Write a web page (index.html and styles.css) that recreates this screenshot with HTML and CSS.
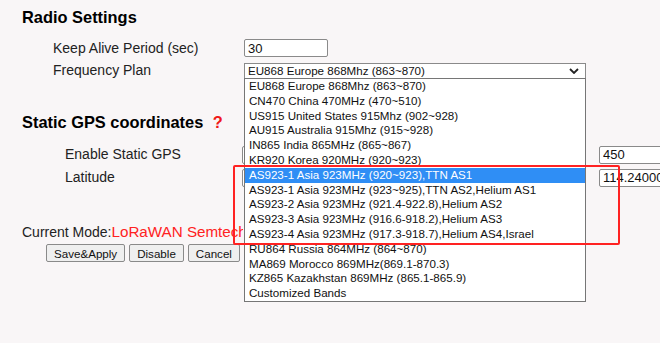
FILE: index.html
```html
<!DOCTYPE html>
<html lang="en">
<head>
    <meta charset="UTF-8">
    <title>Radio Settings</title>
    <link rel="stylesheet" href="styles.css">
</head>
<body>
    <div id="page">
        <h3 class="title">Radio Settings</h3>
        <div class="row sub">
            <span class="lbl">Keep Alive Period (sec)</span>
            <input class="txt short" type="text" value="30"/>
        </div>
        <div class="row sub">
            <span class="lbl">Frequency Plan</span>
            <div class="select">
                <span>EU868 Europe 868Mhz (863~870)</span>
                <svg width="10" height="6" viewBox="0 0 10 6"><polyline points="1,1 5,5 9,1" fill="none" stroke="#222" stroke-width="1.8"/></svg>
            </div>
        </div>

        <h3 class="title gps">Static GPS coordinates <span class="help">?</span></h3>
        <div class="row gpsrow">
            <span class="lbl">Enable Static GPS</span>
            <input class="txt hid" type="text" value=""/>
            <span class="gap"></span>
            <input class="txt side" type="text" value="450"/>
        </div>
        <div class="row gpsrow">
            <span class="lbl">Latitude</span>
            <input class="txt hid" type="text" value=""/>
            <span class="gap"></span>
            <input class="txt side" type="text" value="114.240000"/>
        </div>

        <p class="mode">Current Mode:<span class="red">LoRaWAN Semtech UDP</span></p>
        <div class="btns">
            <button>Save&amp;Apply</button>
            <button>Disable</button>
            <button>Cancel</button>
        </div>
    </div>

    <ul class="popup">
        <li>EU868 Europe 868Mhz (863~870)</li>
        <li>CN470 China 470MHz (470~510)</li>
        <li>US915 United States 915Mhz (902~928)</li>
        <li>AU915 Australia 915Mhz (915~928)</li>
        <li>IN865 India 865MHz (865~867)</li>
        <li>KR920 Korea 920MHz (920~923)</li>
        <li class="on">AS923-1 Asia 923MHz (920~923),TTN AS1</li>
        <li>AS923-1 Asia 923MHz (923~925),TTN AS2,Helium AS1</li>
        <li>AS923-2 Asia 923MHz (921.4-922.8),Helium AS2</li>
        <li>AS923-3 Asia 923MHz (916.6-918.2),Helium AS3</li>
        <li>AS923-4 Asia 923MHz (917.3-918.7),Helium AS4,Israel</li>
        <li>RU864 Russia 864MHz (864~870)</li>
        <li>MA869 Morocco 869MHz(869.1-870.3)</li>
        <li>KZ865 Kazakhstan 869MHz (865.1-865.9)</li>
        <li>Customized Bands</li>
    </ul>
    <div class="mark"></div>
</body>
</html>
```

FILE: styles.css
```css
body,div,p,ul,li,h3{margin:0;padding:0;}
ul{list-style-type:none;}
html,body{height:100%;}
body{background:#f9f6f7;font:14px/1.2 "Liberation Sans",Arial,sans-serif;color:#222;overflow:hidden;}
#page{padding:7px 0 0 22px;}
.title{font-size:16.4px;line-height:20px;color:#000;font-weight:700;}
.title.gps{margin:31px 0 11px;}
.help{color:#f01818;margin-left:5px;}
.row{display:flex;align-items:center;}
.row > *{flex-shrink:0;}
.row.sub{height:22px;padding-left:31px;}
.row.sub:first-of-type{margin-top:10px;}
.row.sub .lbl{width:191px;}
.row.gpsrow{height:23px;padding-left:43px;}
.row.gpsrow .lbl{width:177px;}
.txt{box-sizing:border-box;height:18px;border:1px solid #8a8a8a;border-radius:2px;background:#fff;font:13px "Liberation Sans",Arial,sans-serif;color:#111;padding:0 3px;}
.txt.short{width:84px;}
.txt.hid{width:200px;}
.gap{width:157px;}
.txt.side{width:80px;}
.select{box-sizing:border-box;width:342px;height:16px;border:1px solid #8a8a8a;border-bottom:0;background:#fff;display:flex;align-items:center;justify-content:space-between;padding:0 6px 0 3px;font-size:11.6px;color:#111;margin-top:1px;}
.select svg{display:block;}
.mode{margin-top:34px;width:221px;overflow:hidden;white-space:nowrap;font-size:14px;line-height:17px;}
.mode .red{color:#f22;font-size:15.2px;}
.btns{display:flex;gap:4px;margin:3px 0 0 24px;}
button{box-sizing:border-box;height:18px;padding:0 7px;font:11.6px "Liberation Sans",Arial,sans-serif;color:#111;background:#efefef;border:1px solid #8a8a8a;border-radius:2px;}
.popup{position:absolute;left:244px;top:78px;width:342px;height:224px;box-sizing:border-box;border:1px solid #767676;background:#fff;font-size:11.6px;color:#111;}
.popup li{height:14.8px;line-height:14.8px;padding-left:4px;white-space:nowrap;}
.popup li.on{background:#2f8ef5;color:#fff;}
.mark{position:absolute;left:233px;top:165px;width:387px;height:80px;box-sizing:border-box;border:2.5px solid #f22;border-radius:2px;}
```
